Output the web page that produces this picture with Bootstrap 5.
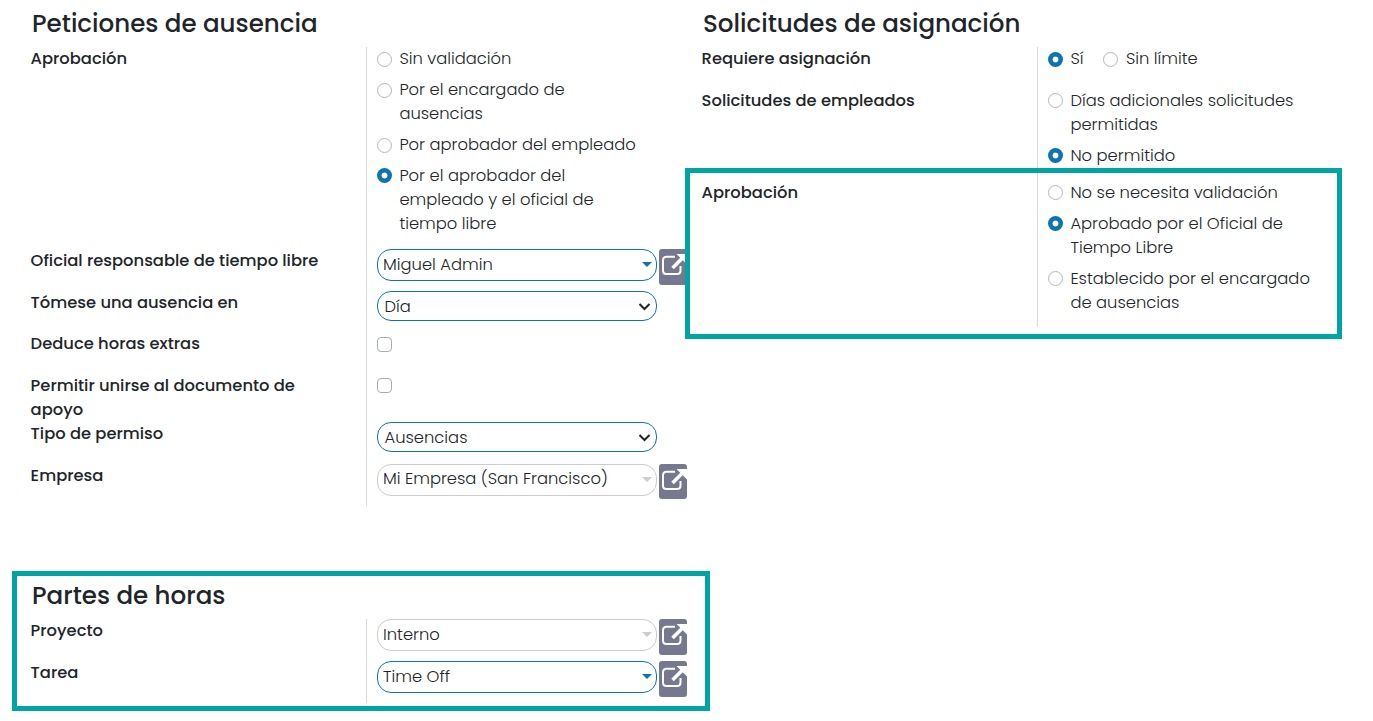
<!DOCTYPE html>
<html lang="es">
<head>
<meta charset="utf-8">
<meta name="viewport" content="width=device-width, initial-scale=1">
<title>Tipo de ausencia</title>
<link href="https://cdn.jsdelivr.net/npm/bootstrap@5.3.0/dist/css/bootstrap.min.css" rel="stylesheet">
<style>
  body { font: 300 16.35px/24px Poppins, Inter, "Open Sans", sans-serif; color: #212529; background: #fff; overflow: hidden; }
  .sheet { height: 721px; }
  .pane { width: 671px; padding: 9px 0 0 3px; }
  .pane-right { width: 640px; padding: 9px 0 0 3px; }
  h2 { font-size: 24.55px; line-height: 30px; font-weight: 500; margin: 0 0 8px 1px; }
  .fila { display: grid; grid-template-columns: 335px 1fr; }
  .fila > label { font-weight: 500; padding-right: 30px; margin-left: -.4px; }
  .valor { border-left: 1px solid #d8dadd; padding-left: 10px; }
  .h41 { height: 41px; } .h42 { height: 42px; } .h48 { height: 48px; }
  .h92 { height: 92px; } .h146 { height: 146px; } .h202 { height: 202px; }
  .opcion { margin: 0 0 7px; display: flex; gap: 7.4px; }
  .form-check-input[type] { width: 15px; height: 15px; margin: 5px 0 0; flex: none; border-color: #b1b7bd; box-shadow: none; float: none; display: block; }
  .form-check-input[type=checkbox] { margin-top: 5px; border-color: #a5adb5; border-radius: 4px; }
  .h48 .form-check-input[type=checkbox], .h92 .form-check-input[type], .h202 .form-check-input[type]:checked { margin-top: 4px; }
  .h146 .opcion { line-height: 24.5px; margin-bottom: 6px; }
  .h146 .form-check-input[type] { margin-top: 4.4px; }
  .form-check-input[type=radio]:checked { border: 0; background: radial-gradient(circle, #fff 2.6px, #0d74ad 3.3px); }
  .campo { width: 280px; height: 32px; border: 1px solid #0d74ad; border-radius: 14px; padding: 0 4px 0 5px; color: #212529; }
  .campo.lista { height: 30px; padding: 0 5px 0 6.5px; }
  .campo.lista span { margin-top: 2px; }
  .campo.gris { border-color: #ccc; color: #212529; }
  .flecha { border: 5px solid transparent; border-top-color: #0d74ad; border-bottom: 0; margin-bottom: 2px; }
  .gris .flecha { border-top-color: #ccc; }
  .abrir { width: 28px; height: 36px; padding: 0; margin-left: 2px; border: 0; border-radius: 3px; background: #75788e; overflow: hidden; }
  .empresa .abrir { height: 35px; }
  .empresa .campo span { margin-bottom: 2px; }
  .abrir svg { display: block; }
  .marco { border: 5px solid #00a4a4; }
  .marco-aprobacion { width: 657px; height: 171px; left: -17px; top: -13px; pointer-events: none; }
  .partes { width: 698px; height: 140px; margin: 65px 0 0 -19px; padding: 5px 0 0 14px; }
</style>
</head>
<body>
<svg class="d-none"><symbol id="ext" viewBox="0 0 28 36"><path d="M16 7.700H7.500Q4 7.700 4 11.200V21.500Q4 25 7.500 25H18Q21.500 25 21.500 21.500V17" fill="none" stroke="#fff" stroke-width="2"/><path d="M13.500 19L24 8.500" stroke="#fff" stroke-width="3.600"/><path d="M17.500 5H28V15.500Z" fill="#fff"/></symbol></svg>
<main class="sheet d-flex ps-4">
  <section class="pane ms-1 flex-shrink-0">
    <h2>Peticiones de ausencia</h2>
    <div class="fila h202"><label>Aprobación</label><div class="valor">
      <div class="opcion"><input class="form-check-input" type="radio" name="a"><span>Sin validación</span></div>
      <div class="opcion"><input class="form-check-input" type="radio" name="a"><span>Por el encargado de<br>ausencias</span></div>
      <div class="opcion"><input class="form-check-input" type="radio" name="a"><span>Por aprobador del empleado</span></div>
      <div class="opcion"><input class="form-check-input" type="radio" name="a" checked><span>Por el aprobador del<br>empleado y el oficial de<br>tiempo libre</span></div>
    </div></div>
    <div class="fila h42"><label>Oficial responsable de tiempo libre</label><div class="valor d-flex align-items-start">
      <div class="campo d-flex align-items-center justify-content-between"><span>Miguel Admin</span><i class="flecha"></i></div>
      <button class="abrir"><svg width="28" height="36"><use href="#ext"/></svg></button>
    </div></div>
    <div class="fila h41"><label>Tómese una ausencia en</label><div class="valor">
      <div class="campo lista d-flex align-items-center justify-content-between"><span>Día</span><svg width="13" height="9" viewBox="0 0 13 9"><path d="M1.500 2L6.500 7L11.500 2" fill="none" stroke="#212529" stroke-width="2"/></svg></div>
    </div></div>
    <div class="fila h42"><label>Deduce horas extras</label><div class="valor"><input class="form-check-input" type="checkbox"></div></div>
    <div class="fila h48"><label>Permitir unirse al documento de apoyo</label><div class="valor"><input class="form-check-input" type="checkbox"></div></div>
    <div class="fila h42"><label>Tipo de permiso</label><div class="valor">
      <div class="campo lista d-flex align-items-center justify-content-between"><span>Ausencias</span><svg width="13" height="9" viewBox="0 0 13 9"><path d="M1.500 2L6.500 7L11.500 2" fill="none" stroke="#212529" stroke-width="2"/></svg></div>
    </div></div>
    <div class="fila h42 empresa"><label>Empresa</label><div class="valor d-flex align-items-start">
      <div class="campo gris d-flex align-items-center justify-content-between"><span>Mi Empresa (San Francisco)</span><i class="flecha"></i></div>
      <button class="abrir"><svg width="28" height="36"><use href="#ext"/></svg></button>
    </div></div>
    <section class="partes marco">
      <h2>Partes de horas</h2>
      <div class="fila h42"><label>Proyecto</label><div class="valor d-flex align-items-start">
        <div class="campo gris d-flex align-items-center justify-content-between"><span>Interno</span><i class="flecha"></i></div>
        <button class="abrir"><svg width="28" height="36"><use href="#ext"/></svg></button>
      </div></div>
      <div class="fila h42"><label>Tarea</label><div class="valor d-flex align-items-start">
        <div class="campo d-flex align-items-center justify-content-between"><span>Time Off</span><i class="flecha"></i></div>
        <button class="abrir"><svg width="28" height="36"><use href="#ext"/></svg></button>
      </div></div>
    </section>
  </section>
  <section class="pane-right flex-shrink-0">
    <h2>Solicitudes de asignación</h2>
    <div class="fila h42"><label>Requiere asignación</label><div class="valor d-flex">
      <div class="opcion"><input class="form-check-input" type="radio" name="b" checked><span>Sí</span></div>
      <div class="opcion ms-3 ps-1"><input class="form-check-input" type="radio" name="b"><span>Sin límite</span></div>
    </div></div>
    <div class="fila h92"><label>Solicitudes de empleados</label><div class="valor">
      <div class="opcion"><input class="form-check-input" type="radio" name="c"><span>Días adicionales solicitudes<br>permitidas</span></div>
      <div class="opcion"><input class="form-check-input" type="radio" name="c" checked><span>No permitido</span></div>
    </div></div>
    <div class="fila h146 position-relative"><label>Aprobación</label><div class="valor">
      <div class="opcion"><input class="form-check-input" type="radio" name="d"><span>No se necesita validación</span></div>
      <div class="opcion"><input class="form-check-input" type="radio" name="d" checked><span>Aprobado por el Oficial de<br>Tiempo Libre</span></div>
      <div class="opcion"><input class="form-check-input" type="radio" name="d"><span>Establecido por el encargado<br>de ausencias</span></div>
    </div><div class="marco marco-aprobacion position-absolute"></div></div>
  </section>
</main>
<script src="https://cdn.jsdelivr.net/npm/bootstrap@5.3.0/dist/js/bootstrap.bundle.min.js"></script>
</body>
</html>
